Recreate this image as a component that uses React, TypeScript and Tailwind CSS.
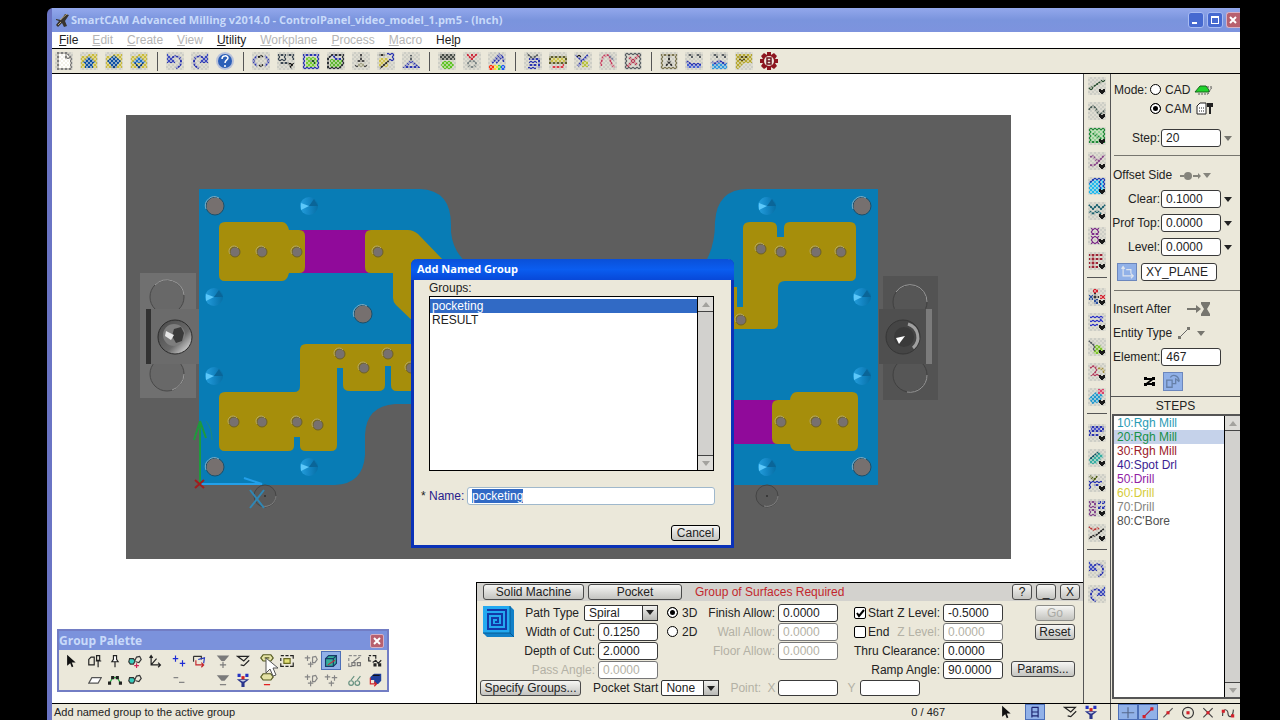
import { useEffect, useRef } from "react";
import type { ReactNode } from "react";
import clsx from "clsx";

// [path, colour, filled?]
type Shape = [string, string, boolean?];

const BLUE = "#2b35b0";
const GREY = "#5a6064";

function Glyph({ shapes, size = 18, dither = false, menu = false }: { shapes: Shape[]; size?: number; dither?: boolean; menu?: boolean }) {
  return (
    <svg width={size} height={size} viewBox="0 0 18 18" className="shrink-0" aria-hidden="true">
      {dither && <rect width="18" height="18" fill="#cdcec6" />}
      {shapes.map(([d, color, filled], i) => (
        <path key={i} d={d} fill={filled ? color : "none"} stroke={filled ? "none" : color} strokeWidth={dither ? 2 : 1.5} />
      ))}
      {dither && <rect width="18" height="18" fill="url(#checker)" />}
      {menu && <path d="M11 12h2v1h2v-1h2v3h-1v1h-1v1h-2v-1h-1v-1h-1z" fill="#1a1a1a" />}
    </svg>
  );
}

const folder: Shape = ["M1 4h6l2-2h8v14H1z", "#c9bb3c", true];
const undo: Shape[] = [
  ["M2 3v7h7M5 7c3-4 10-4 10 3 0 3-2 5-5 6", BLUE],
  ["M1 1l9 9H1z", "#3a48bf", true],
];
const redo: Shape[] = [
  ["M16 3v7H9M13 7C10 3 3 3 3 10c0 3 2 5 5 6", BLUE],
  ["M17 1L8 10h9z", "#3a48bf", true],
];

type Tool = { name: string; shapes: Shape[]; solid?: boolean };

const topTools: Tool[][] = [
  [
    { name: "New", shapes: [["M3 1h9l4 4v12H3z", "#ffffff", true], ["M3 1h9l4 4v12H3zM11 1v5h5", "#7d7d7d"]] },
    { name: "Open", shapes: [folder, ["M9 4l7 7h-3v5H5v-5H2z", "#0b4fa4", true]] },
    { name: "Merge", shapes: [folder, ["M9 3l7 6-7 8-7-8z", "#0b4fa4", true], ["M6 15h6", "#114080"]] },
    { name: "Save", shapes: [folder, ["M9 4l7 7H2z", "#1f6fc8", true], ["M5 11l4 5 4-5", "#0a3c86"]] },
  ],
  [
    { name: "Undo", shapes: undo },
    { name: "Redo", shapes: redo },
    {
      name: "Help topics",
      solid: true,
      shapes: [
        ["M9 0a9 9 0 100 18A9 9 0 109 0z", "#b9c2da", true],
        ["M9 2a7 7 0 100 14A7 7 0 109 2z", "#2c5fb8", true],
        ["M6 7c0-4 6-4 6-1 0 2-3 2-3 5M9 13v2", "#ffffff"],
      ],
    },
  ],
  [
    { name: "Rotate view", shapes: [["M5 4L1 9l4 5M13 4l4 5-4 5", BLUE], ["M6 5l5-1M7 14l4-1", "#222"]] },
    { name: "Zoom", shapes: [["M2 3h6v5H2zM10 3h6v5M3 11h9", "#3b4752"], ["M11 11h6l-3 6z", "#111", true]] },
    { name: "View solid", shapes: [["M4 5h9l3 4-3 6H4z", "#74cc32", true], ["M2 3h14v13H2z", BLUE], ["M8 9h4v3", "#205a20"]] },
    { name: "View box", shapes: [["M3 7h12v8H3z", "#5cb82f", true], ["M1 6l4-3h11v9l-3 4H1z", "#2c3138"], ["M6 3l3 4h5", BLUE]] },
    { name: "Layers", shapes: [["M9 2v7M5 9h8M3 14h12", "#4c4c4c"], ["M6 11h6v4H6z", "#a5a58a", true]] },
    { name: "Sheet", shapes: [["M2 6h9v9H2z", "#cfc250", true], ["M10 2h6v6h-4", BLUE], ["M2 3h6M3 16l9-7", "#333"]] },
    { name: "Plane", shapes: [["M3 15L9 9l7 6z", BLUE], ["M9 3v6", GREY]] },
  ],
  [
    { name: "Simulate", shapes: [["M2 2h15v6H2z", "#454c48", true], ["M5 9h8l3 4-3 4H6l-3-4z", "#5cc322", true]] },
    { name: "Verify", shapes: [["M4 2l4 5 6-5M9 2v6", "#cc2b3d"], ["M5 12a4 3 0 108 0 4 3 0 10-8 0z", "#7c8686"]] },
    {
      name: "Colour",
      shapes: [
        ["M4 11l8-9M8 11L14 4l2 6", BLUE],
        ["M1 13h5v5H1z", "#ff3010", true],
        ["M6 13h4v5H6z", "#f2df2b", true],
        ["M10 13h3v5h-3z", "#3fd64a", true],
        ["M13 13h4v5h-4z", "#1f5cf0", true],
      ],
    },
  ],
  [
    { name: "Pattern", shapes: [["M5 7h10v9M5 10h8M5 13h8M4 16h8", BLUE], ["M3 2l5 4 6-3", GREY]] },
    { name: "Block", shapes: [["M1 5h16v6H1z", "#cbc24a", true], ["M1 5h16v6H1z", "#5f5f2c"], ["M3 15h11v-3", "#dc3c49"]] },
    { name: "Cut", shapes: [["M2 3l12 11M14 3L4 14", BLUE], ["M8 9h6v6H8z", "#b6c03c", true], ["M3 4h4", "#222"]] },
    { name: "Profile", shapes: [["M2 14c0-6 2-11 6-11 5 0 2 12 8 12", "#c83f61"], ["M10 3l5 5", "#7b839d"]] },
    { name: "Delete", shapes: [["M2 2h14v14H2z", GREY], ["M3 15L15 3M5 5l8 8", "#b32243"]] },
  ],
  [
    { name: "Info", shapes: [["M2 3h14v13H2z", "#7c7652"], ["M9 3v8M6 14l3-5 3 5", "#343434"]] },
    { name: "Stack", shapes: [["M2 11h14v5H2z", "#4560d4", true], ["M3 3h4v3M11 3h4v3", GREY], ["M1 9l5 3h10", BLUE]] },
    { name: "Pool", shapes: [["M2 11h15v6H2z", "#2f98df", true], ["M2 10l3 2 4-3 7 3", BLUE], ["M3 3h4v3M11 3h4v3", GREY]] },
    { name: "Note", shapes: [["M1 2h16v9H9l-6 6H1z", "#b5a72f", true], ["M4 5h9M4 8h6", "#5c5110"]] },
    {
      name: "Settings",
      solid: true,
      shapes: [
        ["M7 0h4v3l3-2 3 3-2 3h3v4h-3l2 3-3 3-3-2v3H7v-3l-3 2-3-3 2-3H0V7h3L1 4l3-3 3 2z", "#8d1620", true],
        ["M9 4a5 5 0 100 10A5 5 0 109 4z", "#eee6dc", true],
        ["M7 6h4v6H7zM7 9h4", "#6d1620"],
      ],
    },
  ],
];

const sideTools: { menu: boolean; tools: Tool[] }[] = [
  {
    menu: true,
    tools: [
      { name: "Line", shapes: [["M1 12L16 3M1 12h4M13 4h4", "#2c5134"]] },
      { name: "Curve", shapes: [["M1 8c4-6 6-3 8 1s5 4 8-1", "#4d5f5a"]] },
      { name: "Rectangle", shapes: [["M2 2h14v13H2z", "#8fd294", true], ["M2 2h14v13H2zM5 6l8 6", "#1f8a38"]] },
      { name: "Arcs", shapes: [["M2 5c5-4 5 8 10 2M2 13c5 2 9-4 14-10", "#8a4b8b"]] },
      { name: "Surface", shapes: [["M1 6l5-4h11v9l-4 6H1z", "#1fb8ee", true], ["M1 6l5-4h10v9M12 3v9", "#2040b6"]] },
      { name: "Mesh", shapes: [["M1 3l4 4 4-4 4 4 4-4M1 9l4 3 4-3 4 3", "#1d6270"]] },
      { name: "Holes", shapes: [["M4 2h6v5H4zM4 10h6v6H4z", "#7e2f8a"]] },
      { name: "Blocks", shapes: [["M1 3h14M1 7h14M1 11h9M1 15h9M5 2v14", "#9c2436"]] },
    ],
  },
  {
    menu: true,
    tools: [
      { name: "Points", shapes: [["M5 1h5v4H5zM12 7h5v4h-5z", "#d4212f", true], ["M1 7h4v5H1zM6 11h4v5H6z", "#2a4f9d", true], ["M7 5v6M5 9h6", "#333"]] },
      { name: "Passes", shapes: [["M2 4h12l-2 3M2 8h13M2 12h8", "#2c33c8"]] },
      { name: "Part", shapes: [["M5 7h7l3 4v5H6z", "#7cc32d", true], ["M1 3l5 4v6", GREY]] },
      { name: "Blend", shapes: [["M2 5c6-5 9 2 3 7h6", "#b23d60"], ["M10 6c4-2 6 1 6 4", "#a2903d"]] },
      { name: "Shade", shapes: [["M1 10l7-6 7 3-3 7-8 2z", "#1f98cf", true], ["M10 1h6v5h-6z", "#d8456f", true]] },
    ],
  },
  {
    menu: true,
    tools: [
      { name: "Rough", shapes: [["M2 3h13v4H2v4h9", BLUE], ["M3 5h10", "#4b52d0"]] },
      { name: "Face", shapes: [["M1 10l10-7 5 4-8 8H2z", "#35ada2", true], ["M2 10l9-7", "#135865"]] },
      { name: "Lift", shapes: [["M2 2l4 4 3-4", "#4b5b14"], ["M2 15V8h12M6 11h5", BLUE]] },
      { name: "Array", shapes: [["M2 3h5v5H2zM2 11h5v5H2z", "#83468d"], ["M10 2h3v3h-3zM14 2h3v3h-3zM10 7h3v3h-3zM14 7h3v3h-3z", BLUE, true]] },
      { name: "Trim", shapes: [["M1 3l5 3 5-2", "#bd3a3a"], ["M1 14l7-3 8-6", "#2a2a2a"]] },
    ],
  },
  {
    menu: false,
    tools: [
      { name: "Undo step", shapes: undo },
      { name: "Redo step", shapes: redo },
    ],
  },
];

const pointer: Shape[] = [["M4 1v14l4-3 2 5 2-1-2-5h5z", "#111", true]];
const pin: Shape[] = [["M9 9v8", "#222"], ["M7 2h4v5l2 3H5l2-3z", "#fff", true], ["M7 2h4v5l2 3H5l2-3z", "#222"]];
const lookGlass: Shape[] = [
  ["M2 6h5l2 3-2 4H3l-2-3z", "#39cdbd", true],
  ["M2 6h5l2 3-2 4H3l-2-3zM9 8l2-4 4-1 2 4-3 4-4-1", "#333"],
];
const funnelCheck: Shape[] = [["M2 3h14l-6 6zM6 14l4 1 7-7", "#222"]];
const funnel: Shape[] = [["M1 8h16l-6 5v5H7v-5z", "#2a358c", true], ["M2 1h4v4H2zM12 1h4v4h-4z", "#2332c2", true], ["M7 4h4v4H7z", "#d32222", true], ["M5 9h8l-3 2H8z", "#c8cfe6", true]];
const crosses: Shape[] = [["M1 5h7M4.500 2v7M5 13h7M8.500 10v7", "#858585"], ["M11 4l4-1 2 4-3 4h-3z", "#858585"]];

type Cell = { name: string; shapes: Shape[]; active?: boolean } | null;

// Each group is a pair of rows
const paletteGroups: Cell[][][] = [
  [[{ name: "Pick", shapes: pointer }], [null]],
  [
    [
      { name: "Pin sheet", shapes: [["M1 7l3-3h4v10H1z", "#222"], ["M13 9v8M11 2h4v6h-4zM10 9h7", "#222"]] },
      { name: "Pin", shapes: pin },
      { name: "Find element", shapes: [...lookGlass, ["M8 15h6M11 12v6", "#d32255"]] },
      { name: "Axes", shapes: [["M4 3v11h12M2 5l2-3 2 3M13 11l3 3-3 3M4 14l7-8", "#222"]] },
    ],
    [
      { name: "Plane pick", shapes: [["M5 6h12l-4 7H1z", "#fff", true], ["M5 6h12l-4 7H1z", "#555"]] },
      { name: "Chain", shapes: [["M2 13l4-7h6l4 7", "#31b848"], ["M0 11h4v4H0zM4 4h4v4H4zM10 4h4v4h-4zM14 11h4v4h-4z", "#222", true]] },
      { name: "Find", shapes: lookGlass },
      null,
    ],
  ],
  [
    [
      { name: "Add", shapes: [["M1 6h7M4.500 2v8M10 12h7M13.500 8v8", "#1d2bd4"]] },
      { name: "Swap", shapes: [["M2 3h10v4M2 3v7", "#333"], ["M8 7l8-2-1 7", "#2535bd"], ["M5 8v6h9M12 11l3 3-3 3", "#c3252b"]] },
    ],
    [{ name: "Remove", shapes: [["M2 6h6M9 12h7", "#858585"]] }, null],
  ],
  [
    [
      { name: "Filter add", shapes: [["M1 2h16l-6 7H7z", "#7a7a7a", true], ["M5 14h8M9 10v8", "#7a7a7a"]] },
      { name: "Filter check", shapes: funnelCheck },
    ],
    [
      { name: "Filter remove", shapes: [["M1 3h16l-6 7H7z", "#7a7a7a", true], ["M5 15h8", "#7a7a7a"]] },
      { name: "Filter", shapes: funnel },
    ],
  ],
  [
    [
      { name: "Add named group", shapes: [["M4 1h10l3 4-3 4H4L1 5z", "#e4e2a4", true], ["M4 1h10l3 4-3 4H4L1 5zM6 5h6", "#555a20"]] },
      { name: "Named groups", shapes: [["M1 2h4M7 2h4M13 2h4v4M1 5v4M1 12v4h4M7 16h4M13 16h4v-5", "#222"], ["M5 6h8v6H5z", "#e4e276", true], ["M5 6h8v6H5z", "#6a6a20"]] },
    ],
    [{ name: "Remove named group", shapes: [["M4 1h10l3 4-3 4H4L1 5z", "#e4e2a4", true], ["M4 1h10l3 4-3 4H4L1 5z", "#555a20"], ["M5 15h8", "#e01010"]] }, null],
  ],
  [
    [
      { name: "Add match", shapes: crosses },
      {
        name: "Solid body",
        active: true,
        shapes: [["M2 6l4-4h10v10l-4 4H2z", "#35b09a", true], ["M2 6h10v10H2zM2 6l4-4h10v10l-4 4M12 6l4-4", "#163c68"], ["M5 14l9-6", "#c03040"]],
      },
    ],
    [
      { name: "Add match below", shapes: crosses },
      { name: "Add all", shapes: [["M1 5h7M4.500 2v7M10 6h7M13.500 3v7M6 13h7M9.500 10v7", "#858585"]] },
    ],
  ],
  [
    [
      { name: "Show", shapes: [["M1 2h4M7 2h4M13 2h4M1 5v4M1 12v4h4", "#8d8d8d"], ["M5 11h4v4H5zM12 11h4v4h-4zM7 10l8-6", "#777"]] },
      { name: "Show region", shapes: [["M1 2h3M6 2h4v4M1 4v5h3", "#222"], ["M6 11l4-3 3 4 4-4", "#222"], ["M7 12h4v4H7zM13 12h4v4h-4z", "#222", true]] },
    ],
    [
      { name: "Glasses", shapes: [["M1 13a3 3 0 106 0 3 3 0 10-6 0zM9 13a3 3 0 106 0 3 3 0 10-6 0zM4 9l4-5M12 9l4-5", "#64907f"]] },
      { name: "Swap view", shapes: [["M3 5l5-4h9v9l-4 4H8V9H3z", "#1f3f9c", true], ["M3 6v8h7M8 11l3 3-3 3", "#d3252b"], ["M6 3h9", "#111"]] },
    ],
  ],
];

const snapTools: { name: string; shapes: Shape[]; active?: boolean }[] = [
  { name: "Grid snap", active: true, shapes: [["M1 10h16M9 3v14", "#56688c"]] },
  { name: "End snap", active: true, shapes: [["M4 15L14 5", "#a02048"], ["M2 13h4v4H2zM12 3h4v4h-4z", "#d5202a", true]] },
  { name: "Mid snap", shapes: [["M3 16L15 4", "#555"], ["M7 8h4v4H7z", "#d5202a", true]] },
  { name: "Centre snap", shapes: [["M9 3a7 7 0 100 14A7 7 0 109 3z", "#333"], ["M7 8h4v4H7z", "#d5202a", true]] },
  { name: "Intersection snap", shapes: [["M3 4l12 12M15 4L3 16", "#444"], ["M7 8h4v4H7z", "#d5202a", true]] },
  { name: "Tangent snap", shapes: [["M2 14c0-12 7-8 7-3s6 7 7-5", "#444"], ["M1 6h4v4H1zM13 12h4v4h-4z", "#d5202a", true]] },
];

const menus = [
  { text: "File", at: 0, on: true },
  { text: "Edit", at: 0 },
  { text: "Create", at: 0 },
  { text: "View", at: 0 },
  { text: "Utility", at: 0, on: true },
  { text: "Workplane", at: 0 },
  { text: "Process", at: 0 },
  { text: "Macro", at: 0 },
  { text: "Help", at: 2, on: true },
];

const steps = [
  { text: "10:Rgh Mill", color: "text-[#2a9bb5]" },
  { text: "20:Rgh Mill", color: "text-[#179048]", selected: true },
  { text: "30:Rgh Mill", color: "text-[#9c2028]" },
  { text: "40:Spot Drl", color: "text-[#3b1d92]" },
  { text: "50:Drill", color: "text-[#9021a5]" },
  { text: "60:Drill", color: "text-[#d6cc38]" },
  { text: "70:Drill", color: "text-[#85857f]" },
  { text: "80:C'Bore", color: "text-[#505050]" },
];

const smallHoles = [
  [235, 252], [262, 252], [297, 252], [378, 252], [340, 354], [388, 354], [364, 368], [411, 368],
  [234, 422], [262, 422], [297, 422], [318, 425], [761, 249], [781, 252], [816, 252], [841, 252],
  [741, 320], [781, 422], [816, 422], [843, 422],
];
const bigHoles = [[215, 206], [363, 314], [215, 467], [862, 206], [862, 467]];
const cones = [[309, 206], [214, 297], [214, 376], [309, 467], [767, 206], [862, 297], [862, 376], [767, 467]];
const pins = [[265, 496], [767, 496]];

function Workpiece() {
  return (
    <svg className="block h-full w-full" viewBox="52 74 1031 629" role="img" aria-label="Milled control panel">
      <defs>
        <linearGradient id="cone" x1="0" y1="0" x2="1" y2="0">
          <stop offset="0" stopColor="#259fdd" />
          <stop offset="0.5" stopColor="#1486c4" />
          <stop offset="1" stopColor="#0770a6" />
        </linearGradient>
        <linearGradient id="bolt" x1="0" y1="0" x2="1" y2="1">
          <stop offset="0" stopColor="#484848" />
          <stop offset="0.6" stopColor="#6a6a6a" />
          <stop offset="0.85" stopColor="#c4c4c4" />
          <stop offset="1" stopColor="#6a6a6a" />
        </linearGradient>
      </defs>
      <rect x="126" y="115" width="885" height="444" fill="#5e5e5e" />

      {/* Stock plate */}
      <path
        d="M199 189H420Q451 190 451 225V232Q453 252 468 264H704Q715 248 715 222Q717 189 748 189H878V485H600V404H395Q366 406 365 435V455Q363 484 335 485H199Z"
        fill="#087cb5"
      />
      <path d="M300 230H372V273H300ZM728 400H780V444H728Z" fill="#900a9a" />

      {/* Pockets */}
      <g fill="#a68e0b">
        <path d="M225 222H282Q287 222 289 230H299Q305 230 305 236V267Q305 273 299 273H289Q287 281 282 281H225Q219 281 219 275V228Q219 222 225 222Z" />
        <path d="M371 230H408Q413 230 418 234L445 262V330H422L396 305Q393 302 393 298V273H371Q365 273 365 267V236Q365 230 371 230Z" />
        <path d="M306 344H420V391H397Q391 391 391 385V366H385V385Q385 391 378 391H350Q343 391 343 385V368H337V445Q337 451 331 451H306Q300 451 300 446V437H294V446Q294 451 288 451H225Q219 451 219 445V398Q219 392 225 392H294Q300 392 300 386V350Q300 344 306 344Z" />
        <path d="M750 222H771Q777 222 777 228V237H784V228Q784 222 790 222H850Q856 222 856 228V275Q856 281 850 281H785Q778 281 778 288V323Q778 329 772 329H730V287H737V307H743V228Q743 222 750 222Z" />
        <path d="M778 400H790Q791 392 797 392H852Q858 392 858 398V445Q858 451 852 451H797Q791 451 790 444H778Q772 444 772 438V406Q772 400 778 400Z" />
      </g>

      {smallHoles.map(([x, y]) => (
        <g key={`${x}-${y}`}>
          <circle cx={x} cy={y} r="5" fill="#77706f" stroke="#6d6128" strokeWidth="1" />
          <path d={`M${x - 5} ${y + 2}a5 5 0 018-6`} fill="none" stroke="#b3a768" strokeWidth="1" />
        </g>
      ))}
      {bigHoles.map(([x, y]) => (
        <g key={`${x}-${y}`}>
          <circle cx={x} cy={y} r="9" fill="#76706f" stroke="#1f4f68" strokeWidth="1" />
          <path d={`M${x - 9} ${y + 3}a9 9 0 0113-11`} fill="none" stroke="#7fb0c8" strokeWidth="1" />
        </g>
      ))}
      {cones.map(([x, y]) => (
        <g key={`${x}-${y}`}>
          <circle cx={x} cy={y} r="9" fill="url(#cone)" />
          <path d={`M${x} ${y}L${x - 8} ${y - 3}L${x - 8} ${y + 4}Z`} fill="#5cc8fa" />
          <path d={`M${x} ${y}L${x + 5} ${y - 7}L${x + 9} ${y}Z`} fill="#0a6598" />
        </g>
      ))}

      {/* Left clamp */}
      <rect x="140" y="273" width="56" height="125" fill="#707070" />
      <circle cx="167" cy="297" r="17" fill="#686868" stroke="#484848" />
      <path d="M155 285a17 17 0 0129 10" fill="none" stroke="#9c9c9c" />
      <circle cx="167" cy="374" r="17" fill="#686868" stroke="#484848" />
      <path d="M184 374a17 17 0 01-12 16" fill="none" stroke="#9c9c9c" />
      <rect x="146" y="309" width="53" height="55" fill="#6b6b6b" />
      <rect x="146" y="309" width="5" height="55" fill="#323232" />
      <circle cx="175" cy="337" r="17" fill="url(#bolt)" stroke="#2b2b2b" />
      <circle cx="174" cy="335" r="11" fill="#7d7d7d" />
      <path d="M174 329l7-2 3 6-2 8-6 2-4-7z" fill="#3a3a3a" />
      <path d="M174 335l-8-4-1 5 6 4z" fill="#e6e6e6" />

      {/* Right clamp */}
      <rect x="883" y="276" width="55" height="124" fill="#535353" />
      <circle cx="910" cy="302" r="17" fill="#565656" stroke="#404040" />
      <path d="M896 292a17 17 0 0131 10" fill="none" stroke="#999" />
      <circle cx="910" cy="375" r="17" fill="#565656" stroke="#404040" />
      <path d="M927 375a17 17 0 01-20 17" fill="none" stroke="#999" />
      <rect x="879" y="309" width="48" height="55" fill="#4f4f4f" />
      <rect x="926" y="309" width="6" height="55" fill="#7b7b7b" />
      <circle cx="903" cy="337" r="17" fill="#454545" stroke="#363636" />
      <path d="M908 324a14 14 0 015 24" fill="none" stroke="#a0a0a0" strokeWidth="3" />
      <circle cx="904" cy="337" r="10" fill="#3a3a3a" />
      <path d="M905 336l-9 2 3 6z" fill="#fff" />

      {pins.map(([x, y]) => (
        <g key={x}>
          <circle cx={x} cy={y} r="11" fill="#5a5a5a" stroke="#454545" />
          <path d={`M${x + 11} ${y}a11 11 0 01-14 10`} fill="none" stroke="#858585" />
          <circle cx={x} cy={y} r="1" fill="#2f2f2f" />
        </g>
      ))}

      {/* Axis triad */}
      <path d="M200 484V422" fill="none" stroke="#1e9a3c" strokeWidth="2" />
      <path d="M200 421L194 440M200 421L206 438" fill="none" stroke="#1e9a3c" strokeWidth="2" />
      <path d="M206 421Q212 428 212 440" fill="none" stroke="#1e8a7c" />
      <path d="M201 484H262L244 478" fill="none" stroke="#23a0ea" strokeWidth="2" />
      <path d="M250 490L264 508M264 490L250 508" fill="none" stroke="#2f87b5" strokeWidth="2" />
      <path d="M195 480L204 488M204 480L195 488" stroke="#a11d1d" strokeWidth="2" />
    </svg>
  );
}

function XpButton({ children, className, ...rest }: { children: ReactNode; className?: string; disabled?: boolean; "aria-label"?: string }) {
  return (
    <button
      type="button"
      className={clsx(
        "flex h-4 items-center justify-center rounded-[3px] border border-[#4a4a4a] bg-linear-to-b from-[#f6f6f4] to-[#c4c4c0] text-xs leading-none whitespace-nowrap disabled:border-[#8c8c88] disabled:text-[#a9a9a4]",
        className,
      )}
      {...rest}
    >
      {children}
    </button>
  );
}

function Field({ id, label, value, disabled }: { id: string; label: string; value: string; disabled?: boolean }) {
  return (
    <>
      <label htmlFor={id} className={clsx("whitespace-nowrap", disabled && "text-[#b3b1a5]")}>
        {label}
      </label>
      <input
        id={id}
        defaultValue={value}
        disabled={disabled}
        className="h-[18px] w-[60px] shrink-0 rounded-[3px] border border-[#3a3a3a] bg-white px-1 outline-none disabled:border-[#777] disabled:text-[#b3b1a5]"
      />
    </>
  );
}

function Triangle({ className, up = false }: { className?: string; up?: boolean }) {
  return (
    <svg width="8" height="5" viewBox="0 0 8 5" className={clsx("shrink-0", className)} aria-hidden="true">
      <path d={up ? "M0 5h8L4 0z" : "M0 0h8L4 5z"} fill="currentColor" />
    </svg>
  );
}

function ComboBox({ id, value, className }: { id: string; value: string; className: string }) {
  return (
    <span className={clsx("relative flex h-4", className)}>
      <select id={id} className="w-full appearance-none rounded-[2px] border border-[#333] bg-white pl-1 leading-none">
        <option>{value}</option>
      </select>
      <span className="pointer-events-none absolute inset-y-0 right-0 flex w-4 items-center justify-center border border-[#333] bg-linear-to-b from-[#f0f0ee] to-[#b8b8b4]">
        <Triangle />
      </span>
    </span>
  );
}

function Radio({ name, label, checked }: { name: string; label: ReactNode; checked?: boolean }) {
  return (
    <label className="flex items-center gap-1">
      <input
        type="radio"
        name={name}
        defaultChecked={checked}
        className="size-[11px] appearance-none rounded-full border border-black bg-white checked:bg-black checked:shadow-[inset_0_0_0_2px_white]"
      />
      {label}
    </label>
  );
}

function Check({ label, checked }: { label: string; checked?: boolean }) {
  return (
    <label className="mr-auto flex items-center gap-[2px]">
      <span className="grid">
        <input
          type="checkbox"
          defaultChecked={checked}
          className="peer col-start-1 row-start-1 size-3 appearance-none rounded-[2px] border border-black bg-white"
        />
        <svg viewBox="0 0 12 12" className="pointer-events-none invisible col-start-1 row-start-1 size-3 peer-checked:visible">
          <path d="M3 6l2 3 5-6" fill="none" stroke="#000" strokeWidth="2" />
        </svg>
      </span>
      {label}
    </label>
  );
}

function ScrollBar() {
  return (
    <div className="flex w-4 shrink-0 flex-col justify-between border-l border-black bg-[#d2d1ce] text-[#a3a29e]">
      <button type="button" aria-label="Scroll up" className="flex h-[15px] items-center justify-center border-b border-[#444] bg-[#dddcd8]">
        <Triangle up />
      </button>
      <button type="button" aria-label="Scroll down" className="flex h-[15px] items-center justify-center border-t border-[#444] bg-[#dddcd8]">
        <Triangle />
      </button>
    </div>
  );
}

function TitleBar() {
  return (
    <header className="flex h-6 shrink-0 items-center gap-px bg-linear-to-b from-[#93a8ec] via-[#7a94dd] to-[#7d93de] pl-[3px] font-['Open_Sans',sans-serif] text-[11px] font-bold text-[#c9dafa]">
      <svg width="15" height="15" viewBox="0 0 15 15" aria-hidden="true">
        <path d="M1 6l5 1 4-6 4 1-4 6 2 5-3 1-2-4-4 4-2-2 3-4-3-1z" fill="#38342f" />
        <path d="M5 7l7-6M3 12l3-3" stroke="#b8a67c" />
      </svg>
      <h1>SmartCAM Advanced Milling v2014.0 - ControlPanel_video_model_1.pm5 - (Inch)</h1>
      <div className="ml-auto flex gap-[3px]">
        <button type="button" aria-label="Minimize" className="flex size-4 items-end rounded-[3px] border border-[#a9bcf2] bg-[#4669d0] p-[3px]">
          <span className="h-[2px] w-[5px] bg-white" />
        </button>
        <button type="button" aria-label="Maximize" className="size-4 rounded-[3px] border border-[#a9bcf2] bg-[#4669d0] p-[3px]">
          <span className="block size-2 border border-t-2 border-white" />
        </button>
        <button type="button" aria-label="Close" className="h-4 w-[14px] rounded-l-[3px] border border-r-0 border-[#d6b0c4] bg-[#b8606e]">
          <svg viewBox="0 0 12 12" className="size-3">
            <path d="M3 3l6 6M9 3l-6 6" stroke="#fff" strokeWidth="2" />
          </svg>
        </button>
      </div>
    </header>
  );
}

function MachinePanel() {
  return (
    <section className="absolute right-0 bottom-0 w-[607px] border-t border-l border-black bg-[#ebe8da] pb-[6px]">
      <div className="flex h-[18px] items-center gap-1 bg-[#d3d2ce] pr-[3px] pl-[6px]">
        <XpButton className="w-[101px]">Solid Machine</XpButton>
        <XpButton className="w-[94px]">Pocket</XpButton>
        <span className="mr-auto ml-[9px] text-[#c2272d]">Group of Surfaces Required</span>
        <XpButton className="w-5">?</XpButton>
        <XpButton className="w-5">_</XpButton>
        <XpButton className="w-5">X</XpButton>
      </div>
      <div className="flex pt-[2px] pr-2 pl-[6px]">
        <svg width="31" height="31" viewBox="0 0 31 31" className="mt-[3px] shrink-0" aria-hidden="true">
          <path d="M0 0h27l4 4v27H4l-4-4z" fill="#1280c8" />
          <path d="M0 0h27v27H0z" fill="#23a9f0" />
          <path d="M27 27l4 4M27 0v27H0" stroke="#075a94" fill="none" />
          <path d="M4 4h19v19H5V8h14v11H9v-7h6v4h-3" fill="none" stroke="#1238a8" strokeWidth="2" />
        </svg>
        <div className="w-[144px] *:flex *:h-[19px] *:items-center *:justify-end *:gap-[3px]">
          <div>
            <label htmlFor="path-type" className="mr-[2px]">Path Type</label>
            <ComboBox id="path-type" value="Spiral" className="w-[74px]" />
          </div>
          <div><Field id="cut-width" label="Width of Cut:" value="0.1250" /></div>
          <div><Field id="cut-depth" label="Depth of Cut:" value="2.0000" /></div>
          <div><Field id="pass-angle" label="Pass Angle:" value="0.0000" disabled /></div>
        </div>
        <div className="w-10 pl-[9px] *:h-[19px]">
          <Radio name="dimension" label="3D" checked />
          <Radio name="dimension" label="2D" />
        </div>
        <div className="w-[140px] *:flex *:h-[19px] *:items-center *:justify-end *:gap-[3px]">
          <div><Field id="finish-allow" label="Finish Allow:" value="0.0000" /></div>
          <div><Field id="wall-allow" label="Wall Allow:" value="0.0000" disabled /></div>
          <div><Field id="floor-allow" label="Floor Allow:" value="0.0000" disabled /></div>
        </div>
        <div className="w-[165px] pl-4 *:flex *:h-[19px] *:items-center *:justify-end *:gap-[3px]">
          <div><Check label="Start" checked /><Field id="start-z" label="Z Level:" value="-0.5000" /></div>
          <div><Check label="End" /><Field id="end-z" label="Z Level:" value="0.0000" disabled /></div>
          <div><Field id="thru" label="Thru Clearance:" value="0.0000" /></div>
          <div><Field id="ramp" label="Ramp Angle:" value="90.0000" /></div>
        </div>
        <div className="ml-auto flex flex-col items-end gap-[3px] pt-[2px]">
          <XpButton className="w-10" disabled>Go</XpButton>
          <XpButton className="w-10">Reset</XpButton>
          <XpButton className="mt-[18px] w-16">Params...</XpButton>
        </div>
      </div>
      <div className="flex h-[18px] items-center gap-[3px] pl-[3px]">
        <XpButton className="w-[101px]">Specify Groups...</XpButton>
        <label htmlFor="pocket-start" className="ml-[9px]">Pocket Start</label>
        <ComboBox id="pocket-start" value="None" className="w-[58px]" />
        <span className="ml-2 w-[34px] text-[#b3b1a5]">Point:</span>
        <label htmlFor="point-x" className="text-[#b3b1a5]">X</label>
        <input id="point-x" className="h-4 w-[60px] rounded-[3px] border border-[#3a3a3a] bg-white px-1" />
        <label htmlFor="point-y" className="ml-[6px] text-[#b3b1a5]">Y</label>
        <input id="point-y" className="ml-[2px] h-4 w-[60px] rounded-[3px] border border-[#3a3a3a] bg-white px-1" />
      </div>
    </section>
  );
}

function GroupPalette() {
  return (
    <section className="absolute bottom-[11px] left-[5px] w-[332px] border-2 border-[#727dc4] bg-[#ebe8da]">
      <div className="flex h-[19px] items-center justify-between bg-[#7b92dc] pr-[3px] font-['Open_Sans',sans-serif] text-xs font-bold text-[#c9dafa]">
        <h2>Group Palette</h2>
        <button type="button" aria-label="Close palette" className="size-[14px] rounded-[2px] border border-[#d6b0c4] bg-[#b8606e]">
          <svg viewBox="0 0 12 12" className="size-3">
            <path d="M3 3l6 6M9 3l-6 6" stroke="#fff" strokeWidth="2" />
          </svg>
        </button>
      </div>
      <div className="flex gap-1 py-px pl-[2px]">
        {paletteGroups.map((rows, g) => (
          <div key={g}>
            {rows.map((cells, r) => (
              <div key={r} className="flex">
                {cells.map((cell, c) =>
                  cell ? (
                    <button
                      key={c}
                      type="button"
                      aria-label={cell.name}
                      className={clsx("flex h-[19px] w-5 items-center justify-center", cell.active && "border border-[#4c6fb8] bg-[#91b1e8]")}
                    >
                      <Glyph shapes={cell.shapes} size={14} />
                    </button>
                  ) : (
                    <span key={c} className="h-[19px] w-5" />
                  ),
                )}
              </div>
            ))}
          </div>
        ))}
      </div>
      <svg width="14" height="20" viewBox="0 0 14 20" className="absolute top-[26px] left-[206px]" aria-hidden="true">
        <path d="M1 1v15l4-4 3 7 3-1-3-7h5z" fill="#fff" stroke="#555" />
      </svg>
    </section>
  );
}

function NamedGroupDialog() {
  const nameRef = useRef<HTMLInputElement>(null);

  useEffect(() => {
    nameRef.current?.focus();
    nameRef.current?.select();
  }, []);

  return (
    <div role="dialog" aria-labelledby="dialog-title" className="absolute top-[185px] left-[359px] w-[323px] rounded-t-md border-[3px] border-t-0 border-[#0a32b8] bg-[#ebe8da]">
      <h2
        id="dialog-title"
        className="-mx-[3px] flex h-[21px] items-center rounded-t-md bg-linear-to-b from-[#0a50d8] via-[#0a5df0] to-[#0848d8] pl-[6px] font-['Open_Sans',sans-serif] text-[11px] font-bold text-white"
      >
        Add Named Group
      </h2>
      <div className="flex flex-col px-[15px] pt-px pb-1">
        <span id="groups-label" className="leading-[15px]">Groups:</span>
        <div className="mr-[2px] flex h-[175px] border border-black bg-white">
          <ul role="listbox" aria-labelledby="groups-label" className="flex-1 pt-[2px] leading-[14px]">
            <li role="option" aria-selected="true" className="bg-[#316ac5] pl-[2px] text-white">pocketing</li>
            <li role="option" aria-selected="false" className="pl-[2px]">RESULT</li>
          </ul>
          <ScrollBar />
        </div>
        <div className="mt-4 -ml-2 flex items-center">
          <span className="w-2">*</span>
          <label htmlFor="group-name" className="w-[38px] text-[#28208c]">Name:</label>
          <input
            id="group-name"
            ref={nameRef}
            defaultValue="pocketing"
            className="mr-px h-[18px] min-w-0 flex-1 rounded-[3px] border border-[#9fb8cc] bg-white px-1 outline-none selection:bg-[#316ac5] selection:text-white"
          />
        </div>
        <XpButton className="mt-5 mr-[-4px] w-[49px] self-end border-black">Cancel</XpButton>
      </div>
    </div>
  );
}

function PropertyPanel() {
  const row = "flex h-6 items-center justify-end gap-px";

  return (
    <aside className="flex w-[130px] shrink-0 flex-col border-l border-[#555]">
      <div className="pt-[6px] pl-[3px]">
        <div role="radiogroup" aria-labelledby="mode-label" className="grid grid-cols-[36px_1fr] *:h-[19px]">
          <span id="mode-label" className="flex items-center">Mode:</span>
          <Radio
            name="mode"
            label={
              <>
                CAD
                <svg width="20" height="12" viewBox="0 0 20 12" aria-hidden="true">
                  <path d="M1 8l5-6h6l3 4v2z" fill="#1fd32b" stroke="#18661e" />
                  <path d="M13 3h5l-4 7H3" fill="none" stroke="#555" strokeDasharray="2 1" />
                </svg>
              </>
            }
          />
          <span />
          <Radio
            name="mode"
            checked
            label={
              <>
                CAM
                <svg width="18" height="13" viewBox="0 0 18 13" aria-hidden="true">
                  <path d="M4 1h6v11H1V4z" fill="#fff" stroke="#222" />
                  <path d="M3 6h5M3 9h5" stroke="#222" strokeDasharray="1 1" />
                  <path d="M11 1h6v4h-2v7h-2V5h-2z" fill="#222" />
                </svg>
              </>
            }
          />
        </div>
        <div className="mt-2 flex h-6 items-center justify-end gap-px">
          <Field id="step" label="Step:" value="20" />
          <Triangle className="mr-2 ml-[2px] text-[#77766f]" />
        </div>
      </div>
      <hr className="mt-[5px] mb-[7px] ml-[3px] border-[#77766f]" />
      <div className="pl-px">
        <div className="flex h-6 items-center gap-2 pl-px">
          Offset Side
          <svg width="32" height="9" viewBox="0 0 32 9" fill="#85847c" aria-hidden="true">
            <path d="M0 4h4v2H0zM13 4h5V2l3 3-3 3V6h-5z" />
            <circle cx="8" cy="5" r="4" />
            <path d="M23 2h8l-4 5z" />
          </svg>
        </div>
        <div className={row}><Field id="clear" label="Clear:" value="0.1000" /><Triangle className="mr-2 ml-[2px]" /></div>
        <div className={row}><Field id="prof-top" label="Prof Top:" value="0.0000" /><Triangle className="mr-2 ml-[2px]" /></div>
        <div className={row}><Field id="level" label="Level:" value="0.0000" /><Triangle className="mr-2 ml-[2px]" /></div>
        <div className="flex h-[26px] items-center gap-1 pl-[5px]">
          <button type="button" aria-label="Work plane" className="flex h-[18px] w-5 items-center justify-center border border-[#6c87bd] bg-[#91b1e8]">
            <Glyph size={14} shapes={[["M4 2v12h13M2 5l2-3 2 3M14 11l3 3-3 3M8 6h6v5", "#dfe5ee"]]} />
          </button>
          <input
            aria-label="Plane name"
            defaultValue="XY_PLANE"
            className="h-[18px] w-[76px] rounded-[3px] border border-[#3a3a3a] bg-white px-1 outline-none"
          />
        </div>
      </div>
      <hr className="mt-[5px] mb-[6px] ml-[3px] border-[#77766f]" />
      <div className="pl-[2px]">
        <div className="flex h-6 items-center justify-between pr-[29px]">
          Insert After
          <svg width="24" height="14" viewBox="0 0 24 14" fill="#77766f" aria-hidden="true">
            <path d="M0 6h9V3l5 4-5 4V8H0zM14 0h9v2l-3 5 3 5v2h-9v-2l3-5-3-5z" />
          </svg>
        </div>
        <div className="flex h-6 items-center gap-[6px]">
          Entity Type
          <svg width="28" height="12" viewBox="0 0 28 12" aria-hidden="true">
            <path d="M2 10l8-8" stroke="#666" />
            <path d="M0 9h3v3H0zM9 0h3v3H9zM19 4h8l-4 5z" fill="#77766f" />
          </svg>
        </div>
        <div className="flex h-6 items-center gap-px"><Field id="element" label="Element:" value="467" /></div>
        <div className="flex h-6 items-center gap-2 pl-[31px]">
          <svg width="11" height="9" viewBox="0 0 11 9" aria-hidden="true">
            <path d="M0 0h3v1h5V0h3v3H9L5 6h3V5h3v4H8V8H3v1H0V6h2l4-3H0z" />
          </svg>
          <button type="button" aria-label="Link element" className="flex h-[19px] w-5 items-center justify-center border border-[#6c87bd] bg-[#91b1e8]">
            <Glyph size={16} shapes={[["M2 8h6v8H2zM8 12h4V6M6 5c2-4 9-3 10 4M13 7l3 3", "#6680a8"]]} />
          </button>
        </div>
      </div>
      <div className="mt-[3px] flex flex-1 flex-col border-t border-[#555]">
        <h2 id="steps-label" className="h-[17px] text-center leading-[18px]">STEPS</h2>
        <div className="mb-1 ml-px flex flex-1 border-2 border-r-0 border-[#555] bg-white">
          <ul role="listbox" aria-labelledby="steps-label" className="flex-1 leading-[14px]">
            {steps.map((step) => (
              <li key={step.text} role="option" aria-selected={!!step.selected} className={clsx("pl-[3px]", step.color, step.selected && "bg-[#c5d2ea]")}>
                {step.text}
              </li>
            ))}
          </ul>
          <ScrollBar />
        </div>
      </div>
    </aside>
  );
}

export default function App() {
  return (
    <div className="flex h-screen flex-col overflow-hidden bg-black pt-2 pr-10 pl-[47px] font-['Liberation_Sans',Arial,sans-serif] text-xs text-[#222]">
      <svg className="absolute size-0" aria-hidden="true">
        <pattern id="checker" width="4" height="4" patternUnits="userSpaceOnUse">
          <path d="M0 0h2v2H0zM2 2h2v2H2z" fill="#ebe8da" fillOpacity="0.6" />
        </pattern>
      </svg>
      <main className="flex min-h-0 flex-1 flex-col rounded-tl-md border-l-[5px] border-[#6a74c4] bg-[#ebe8da]">
        <TitleBar />
        <nav className="flex h-[17px] shrink-0 items-center gap-[14px] border-b border-black bg-white pl-[7px]">
          {menus.map(({ text, at, on }) => (
            <button key={text} type="button" disabled={!on} className="disabled:text-[#b4b4b4]">
              {text.slice(0, at)}
              <u>{text[at]}</u>
              {text.slice(at + 1)}
            </button>
          ))}
        </nav>
        <div className="flex h-[25px] shrink-0 items-center gap-[7px] border-b border-black pl-[3px]">
          {topTools.map((group, g) => (
            <div key={g} className="flex items-center gap-[7px]">
              {g > 0 && <span className="mr-px ml-[2px] h-[19px] w-px bg-[#555]" />}
              {group.map((tool) => (
                <button key={tool.name} type="button" aria-label={tool.name}>
                  <Glyph shapes={tool.shapes} dither={!tool.solid} />
                </button>
              ))}
            </div>
          ))}
        </div>

        <div className="flex min-h-0 flex-1 border-b border-black">
          <div className="relative min-w-0 flex-1 overflow-hidden bg-white">
            <Workpiece />
            <MachinePanel />
            <GroupPalette />
            <NamedGroupDialog />
          </div>
          <div className="flex w-[27px] shrink-0 flex-col items-center gap-[7px] border-l border-[#555] pt-[3px]">
            {sideTools.map(({ menu, tools }, g) => (
              <div key={g} className="flex flex-col items-center gap-[7px]">
                {g > 0 && <span className="mb-[3px] h-px w-5 bg-[#555]" />}
                {tools.map((tool) => (
                  <button key={tool.name} type="button" aria-label={tool.name}>
                    <Glyph shapes={tool.shapes} dither menu={menu} />
                  </button>
                ))}
              </div>
            ))}
          </div>
          <PropertyPanel />
        </div>

        <footer className="flex h-4 shrink-0 items-center pl-[2px]">
          <span className="text-[11px]">Add named group to the active group</span>
          <span className="mr-[54px] ml-auto text-[11px]">0 / 467</span>
          <Glyph shapes={pointer} size={14} />
          <button type="button" aria-label="Body select" className="ml-3 flex h-4 w-5 items-center justify-center border border-[#4c6fb8] bg-[#91b1e8]">
            <Glyph size={14} shapes={[["M5 3h8v13M5 3v13M5 9h8M5 14h8", "#1c2470"]]} />
          </button>
          <div className="mr-3 ml-[18px] flex gap-[7px]">
            <Glyph shapes={funnelCheck} size={14} />
            <Glyph shapes={funnel} size={14} />
          </div>
          <div className="flex h-4 w-[130px] items-center border-l border-[#555] pl-[7px]">
            {snapTools.map((tool) => (
              <button
                key={tool.name}
                type="button"
                aria-label={tool.name}
                className={clsx("flex h-4 w-5 items-center justify-center", tool.active && "border border-[#4c6fb8] bg-[#91b1e8]")}
              >
                <Glyph shapes={tool.shapes} size={14} />
              </button>
            ))}
          </div>
        </footer>
      </main>
    </div>
  );
}
